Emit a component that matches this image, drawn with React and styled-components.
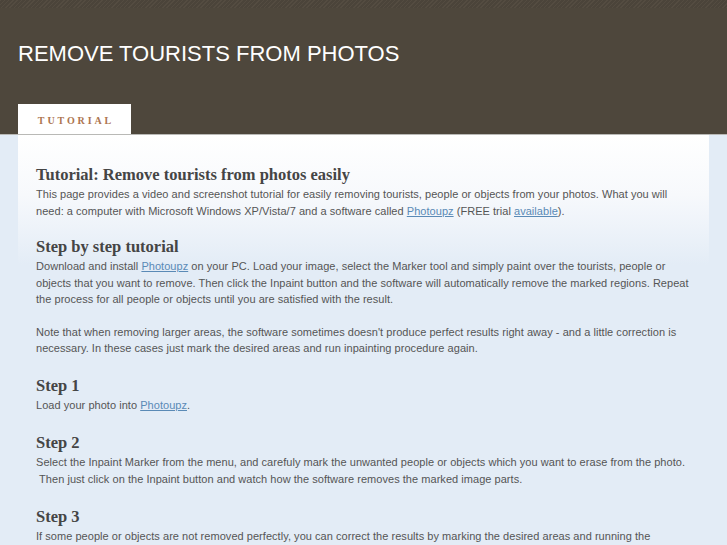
import React from "react";
import styled, { createGlobalStyle } from "styled-components";

const GlobalStyle = createGlobalStyle`
  html, body {
    margin: 0;
    padding: 0;
    background: #e3ecf6;
  }
  body {
    font-family: "Liberation Sans", Arial, sans-serif;
  }
`;

const Header = styled.header`
  background: #4e473c;
  padding: 0 18px;
  position: relative;
  &::before {
    content: "";
    position: absolute;
    left: 0;
    right: 0;
    top: 0;
    height: 8px;
    background: repeating-linear-gradient(
      135deg,
      #544c41 0px,
      #544c41 1px,
      #4b443a 1px,
      #4b443a 3px
    );
  }
`;

const SiteTitle = styled.h1`
  margin: 0;
  padding: 41px 0 0;
  height: 63px;
  color: #ffffff;
  font-family: "Liberation Sans", Arial, sans-serif;
  font-weight: normal;
  font-size: 22px;
  line-height: 26px;
`;

const Tabs = styled.nav`
  display: flex;
`;

const Tab = styled.a`
  display: block;
  width: 113px;
  height: 30px;
  box-sizing: border-box;
  padding-top: 11px;
  padding-left: 3px;
  text-align: center;
  background: ${(p) => (p.$active ? "#ffffff" : "transparent")};
  color: #ad7550;
  font-family: "Liberation Serif", "Times New Roman", serif;
  font-weight: bold;
  font-size: 10px;
  letter-spacing: 2.9px;
  text-transform: uppercase;
`;

const Rule = styled.div`
  height: 1px;
  background: #b9b9b6;
`;

const Main = styled.main`
  padding: 0 18px;
`;

const Panel = styled.div`
  width: 691px;
  box-sizing: border-box;
  padding: 30px 18px 20px;
  background: linear-gradient(to bottom, #ffffff 0px, #f7f9fc 60px, #e3ecf6 130px, #e3ecf6 100%);
`;

const Section = styled.section`
  margin-bottom: ${(p) => p.$gap || 17}px;
`;

const Heading = styled.h2`
  margin: 0 0 1px;
  color: #454545;
  font-family: "Liberation Serif", "Times New Roman", serif;
  font-weight: bold;
  font-size: 16.5px;
  line-height: 20px;
`;

const Text = styled.p`
  margin: 0;
  color: #555555;
  font-size: 11px;
  line-height: 16.5px;
  letter-spacing: 0.04px;
  & + & {
    margin-top: 16px;
  }
`;

const Link = styled.a`
  color: #5a8ab6;
  text-decoration: underline;
`;

export default function App() {
  return (
    <>
      <GlobalStyle />
      <Header>
        <SiteTitle>REMOVE TOURISTS FROM PHOTOS</SiteTitle>
        <Tabs>
          <Tab $active>Tutorial</Tab>
        </Tabs>
      </Header>
      <Rule />
      <Main>
        <Panel>
          <Section $gap={18}>
            <Heading>Tutorial: Remove tourists from photos easily</Heading>
            <Text>
              This page provides a video and screenshot tutorial for easily removing tourists, people or
              objects from your photos. What you will need: a computer with Microsoft Windows XP/Vista/7
              and a software called <Link>Photoupz</Link> (FREE trial <Link>available</Link>).
            </Text>
          </Section>
          <Section $gap={19}>
            <Heading>Step by step tutorial</Heading>
            <Text>
              Download and install <Link>Photoupz</Link> on your PC. Load your image, select the Marker
              tool and simply paint over the tourists, people or objects that you want to remove. Then
              click the Inpaint button and the software will automatically remove the marked regions.
              Repeat the process for all people or objects until you are satisfied with the result.
            </Text>
            <Text>
              Note that when removing larger areas, the software sometimes doesn't produce perfect
              results right away - and a little correction is necessary. In these cases just mark the
              desired areas and run inpainting procedure again.
            </Text>
          </Section>
          <Section $gap={20}>
            <Heading>Step 1</Heading>
            <Text>
              Load your photo into <Link>Photoupz</Link>.
            </Text>
          </Section>
          <Section $gap={20}>
            <Heading>Step 2</Heading>
            <Text>
              Select the Inpaint Marker from the menu, and carefuly mark the unwanted people or objects
              which you want to erase from the photo.
              <br />
              &nbsp;Then just click on the Inpaint button and watch how the software removes the marked
              image parts.
            </Text>
          </Section>
          <Section>
            <Heading>Step 3</Heading>
            <Text>
              If some people or objects are not removed perfectly, you can correct the results by marking
              the desired areas and running the inpainting procedure again.
            </Text>
          </Section>
        </Panel>
      </Main>
    </>
  );
}
